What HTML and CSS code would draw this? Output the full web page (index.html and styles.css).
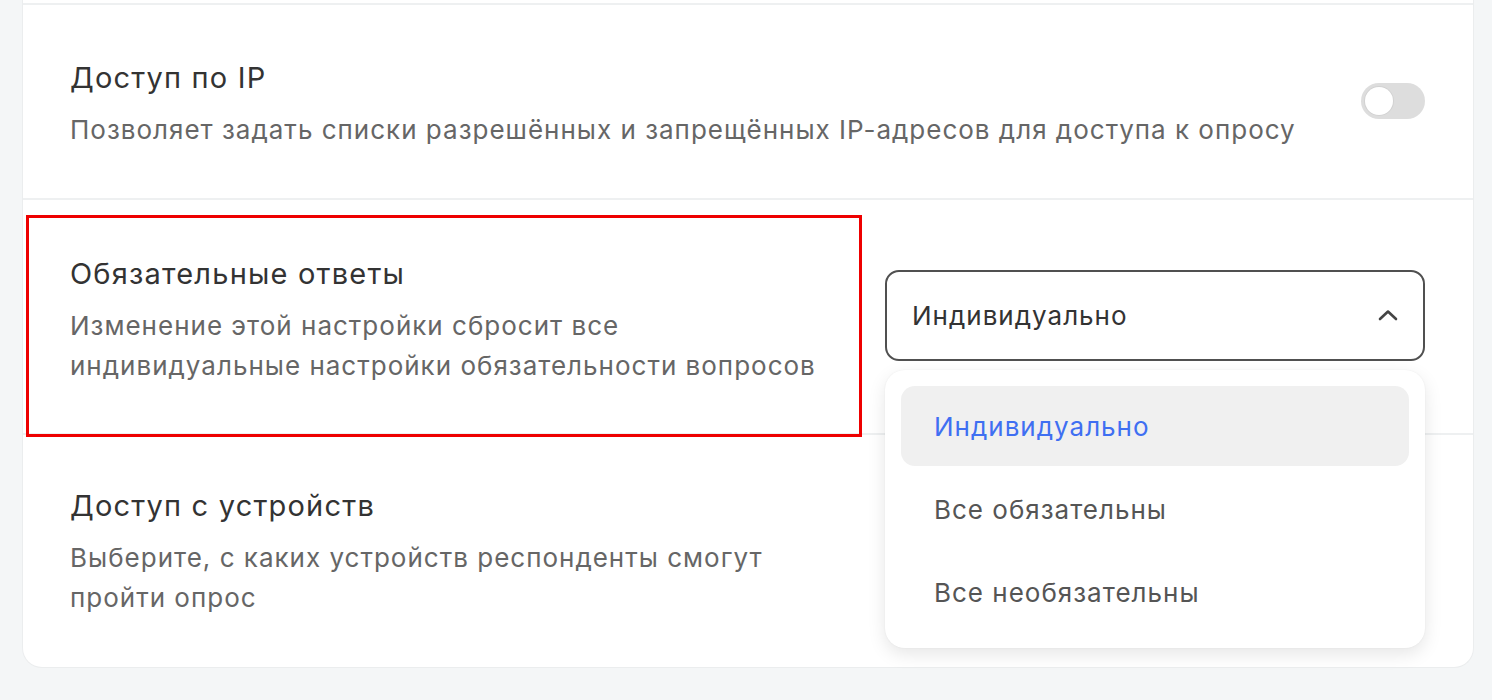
FILE: index.html
```html
<!DOCTYPE html>
<html lang="ru">
<head>
<meta charset="utf-8">
<title>Настройки опроса</title>
<link rel="stylesheet" href="styles.css">
</head>
<body>
<div class="page">
  <div class="card">
    <div class="stub"></div>
    <div class="row row-first">
      <div class="text">
        <div class="title">Доступ по IP</div>
        <div class="desc">Позволяет задать списки разрешённых и запрещённых IP-адресов для доступа к опросу</div>
      </div>
      <div class="toggle"><span class="knob"></span></div>
    </div>
    <div class="row row-select">
      <div class="text text-narrow">
        <div class="title">Обязательные ответы</div>
        <div class="desc">Изменение этой настройки сбросит все индивидуальные настройки обязательности вопросов</div>
      </div>
      <div class="highlight-box"></div>
      <div class="select-wrap">
        <div class="select">
          <span>Индивидуально</span>
          <svg class="chevron" width="22" height="14" viewBox="0 0 22 14" fill="none"><path d="M3 11 L11 3.5 L19 11" stroke="#444" stroke-width="2.6" stroke-linecap="round" stroke-linejoin="round"/></svg>
        </div>
        <div class="menu">
          <div class="option option-active">Индивидуально</div>
          <div class="option">Все обязательны</div>
          <div class="option">Все необязательны</div>
        </div>
      </div>
    </div>
    <div class="row row-last">
      <div class="text text-narrow">
        <div class="title">Доступ с устройств</div>
        <div class="desc">Выберите, с каких устройств респонденты смогут пройти опрос</div>
      </div>
    </div>
  </div>
</div>
</body>
</html>
```
FILE: styles.css
```css
* { box-sizing: border-box; }
html, body { margin: 0; padding: 0; }
body {
  background: #f4f6f7;
  font-family: "Inter", "Noto Sans", sans-serif;
  color: #2e2e2e;
  width: 1492px;
  height: 700px;
  overflow: hidden;
}
.page { padding: 0 18px 0 22px; }
.card {
  background: #ffffff;
  border: 1px solid #ebedee;
  border-top: none;
  border-radius: 0 0 20px 20px;
  width: 1452px;
}
.stub { height: 5px; border-bottom: 2px solid #eef0f1; }
.row {
  position: relative;
  display: flex;
  align-items: center;
  justify-content: space-between;
  padding: 56px 48px 47px 47px;
  border-bottom: 2px solid #eef0f1;
}
.row-first { padding-top: 55px; padding-bottom: 48px; }
.row-select { align-items: flex-start; padding-bottom: 47px; }
.row-last { border-bottom: none; padding-top: 53px; padding-bottom: 49px; }
.text-narrow { width: 770px; }
.title {
  font-size: 29px;
  line-height: 36px;
  color: #333333;
  letter-spacing: 1.2px;
}
.desc {
  margin-top: 14px;
  font-size: 26px;
  line-height: 40px;
  color: #666666;
  letter-spacing: 1.0px;
}
.toggle {
  width: 64px;
  height: 36px;
  border-radius: 18px;
  background: #dddddd;
  padding: 4px;
  margin-top: -8px;
}
.knob {
  display: block;
  width: 28px;
  height: 28px;
  border-radius: 50%;
  background: #ffffff;
  box-shadow: 0 0 0 1px #d2d2d2;
}
.highlight-box {
  position: absolute;
  left: 3px;
  top: 15px;
  width: 836px;
  height: 222px;
  border: 3px solid #ee0000;
  pointer-events: none;
}
.select-wrap {
  position: relative;
  width: 540px;
  margin-top: 14px;
}
.select {
  height: 91px;
  border: 2px solid #505050;
  border-radius: 14px;
  display: flex;
  align-items: center;
  justify-content: space-between;
  padding: 0 24px 0 25px;
  font-size: 26px;
  letter-spacing: 1.0px;
  color: #333333;
}
.chevron { margin-top: -2px; }
.menu {
  position: absolute;
  left: 0;
  right: 0;
  top: 100px;
  background: #ffffff;
  border-radius: 20px;
  box-shadow: 0 6px 18px rgba(0, 0, 0, 0.10), 0 0 2px rgba(0, 0, 0, 0.06);
  padding: 16px;
  display: flex;
  flex-direction: column;
  gap: 3px;
  z-index: 2;
}
.option {
  height: 80px;
  display: flex;
  align-items: center;
  padding-left: 33px;
  border-radius: 14px;
  font-size: 26px;
  letter-spacing: 1.0px;
  color: #555555;
}
.option-active {
  background: #f0f0f0;
  color: #3f6ff2;
}
```
